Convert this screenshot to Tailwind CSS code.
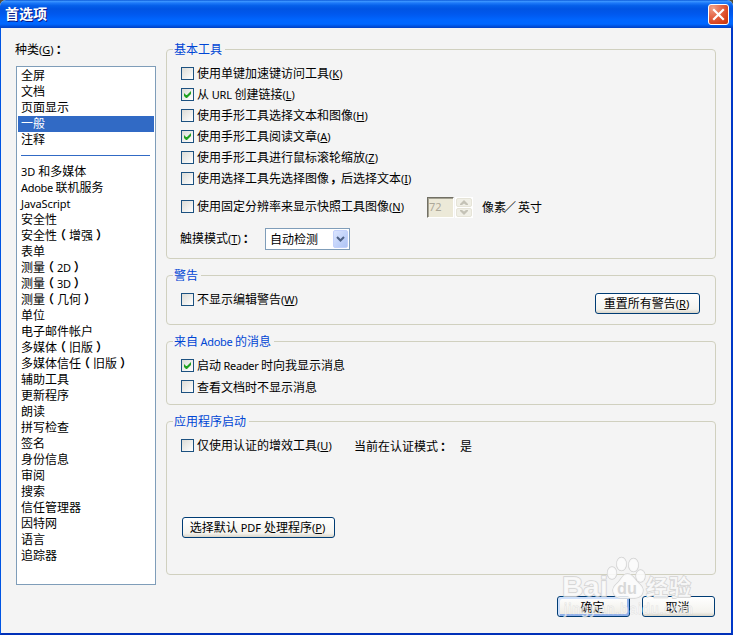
<!DOCTYPE html>
<html lang="zh-CN">
<head>
<meta charset="utf-8">
<title>首选项</title>
<script src="https://cdn.jsdelivr.net/npm/@tailwindcss/browser@4"></script>
</head>
<body class="w-[733px] h-[635px] overflow-hidden bg-[#54503c] font-['Noto_Sans_CJK_SC',sans-serif] text-[12px] leading-[16px] text-black whitespace-nowrap">
<div class="relative w-[733px] h-[635px] flex flex-col overflow-hidden rounded-t-[6px] bg-[#f4f4f4]">
  <header class="h-[28px] shrink-0 flex items-center justify-between pl-[5px] pr-[4px] bg-[linear-gradient(180deg,#0a58d8_0%,#3a94ff_5%,#1c78f8_11%,#0560ea_20%,#0054e3_32%,#0058ee_50%,#0066ff_72%,#0067ff_86%,#0050dc_94%,#0040c4_100%)]">
    <h1 class="text-[14px] leading-[20px] pb-[2px] font-bold text-white [text-shadow:1px_1px_0_#0a1883]">首选项</h1>
    <button class="w-[21px] h-[21px] rounded-[3px] border border-white flex items-center justify-center bg-[radial-gradient(circle_at_20%_15%,#f0a088_0%,#e5694b_38%,#da4621_70%,#c23408_100%)]">
      <svg width="13" height="13" viewBox="0 0 13 13"><path d="M2 2L11 11M11 2L2 11" stroke="#fff" stroke-width="2.2" stroke-linecap="square"/></svg>
    </button>
  </header>
  <main class="flex-1 flex border-l border-l-[#0054e3] border-r-2 border-r-[#0038c8] border-b-2 border-b-[#0030b8]">
    <section class="w-[140px] ml-[15px] pt-[13px]">
      <div class="h-[25px] -ml-px">种类<span class="font-['Noto_Sans'] text-[11px]">(<u>G</u>)</span><span class="relative left-[2px] font-bold">：</span></div>
      <ul class="h-[519px] border border-[#7f9db9] bg-white p-px [&>li]:h-[16px] [&>li]:pl-[3px] [&>li]:leading-[14px]">
        <li>全屏</li>
        <li>文档</li>
        <li>页面显示</li>
        <li class="bg-[#316ac5] text-white">一般</li>
        <li>注释</li>
        <li class="pt-[7px] pr-[4px]"><div class="h-px bg-[#316ac5]"></div></li>
        <li><span class="font-['Noto_Sans'] text-[11px]">3D </span>和多媒体</li>
        <li><span class="font-['Noto_Sans'] text-[11px] tracking-[-0.3px]">Adobe </span>联机服务</li>
        <li><span class="font-['Noto_Sans'] text-[11px] tracking-[-0.1px]">JavaScript</span></li>
        <li>安全性</li>
        <li>安全性<span class="relative -left-[3px] font-bold">（</span>增强<span class="relative left-[3px] font-bold">）</span></li>
        <li>表单</li>
        <li>测量<span class="relative -left-[3px] font-bold">（</span><span class="font-['Noto_Sans'] text-[11px] tracking-[-0.3px]">2D</span><span class="relative left-[3px] font-bold">）</span></li>
        <li>测量<span class="relative -left-[3px] font-bold">（</span><span class="font-['Noto_Sans'] text-[11px] tracking-[-0.3px]">3D</span><span class="relative left-[3px] font-bold">）</span></li>
        <li>测量<span class="relative -left-[3px] font-bold">（</span>几何<span class="relative left-[3px] font-bold">）</span></li>
        <li>单位</li>
        <li>电子邮件帐户</li>
        <li>多媒体<span class="relative -left-[3px] font-bold">（</span>旧版<span class="relative left-[3px] font-bold">）</span></li>
        <li>多媒体信任<span class="relative -left-[3px] font-bold">（</span>旧版<span class="relative left-[3px] font-bold">）</span></li>
        <li>辅助工具</li>
        <li>更新程序</li>
        <li>朗读</li>
        <li>拼写检查</li>
        <li>签名</li>
        <li>身份信息</li>
        <li>审阅</li>
        <li>搜索</li>
        <li>信任管理器</li>
        <li>因特网</li>
        <li>语言</li>
        <li>追踪器</li>
      </ul>
    </section>
    <section class="w-[550px] ml-[10px] pt-[21px]">
      <div class="relative h-[210px] mb-[16px] rounded-[4px] border border-[#d0d0bf] pt-[13px] pl-[14px]">
        <h2 class="absolute -top-[9px] left-[6px] pl-px pr-[3px] bg-[#f4f4f4] text-[#0046d5]">基本工具</h2>
        <label class="h-[21px] flex items-center gap-[3px]"><i class="w-[13px] h-[13px] border border-[#1c5180] bg-linear-to-br from-[#dcdcd7] to-white"></i><span>使用单键加速键访问工具<span class="font-['Noto_Sans'] text-[11px]">(<u>K</u>)</span></span></label>
        <label class="h-[21px] flex items-center gap-[3px]"><i class="w-[13px] h-[13px] border border-[#1c5180] bg-linear-to-br from-[#dcdcd7] to-white"><svg class="block" width="11" height="11" viewBox="0 0 11 11"><path d="M2 4v3l2 2h1l4-4v-3l-4 4h-1z" fill="#21a121"/></svg></i><span>从<span class="font-['Noto_Sans'] text-[11px] tracking-[-0.2px]"> URL </span>创建链接<span class="font-['Noto_Sans'] text-[11px]">(<u>L</u>)</span></span></label>
        <label class="h-[21px] flex items-center gap-[3px]"><i class="w-[13px] h-[13px] border border-[#1c5180] bg-linear-to-br from-[#dcdcd7] to-white"></i><span>使用手形工具选择文本和图像<span class="font-['Noto_Sans'] text-[11px]">(<u>H</u>)</span></span></label>
        <label class="h-[21px] flex items-center gap-[3px]"><i class="w-[13px] h-[13px] border border-[#1c5180] bg-linear-to-br from-[#dcdcd7] to-white"><svg class="block" width="11" height="11" viewBox="0 0 11 11"><path d="M2 4v3l2 2h1l4-4v-3l-4 4h-1z" fill="#21a121"/></svg></i><span>使用手形工具阅读文章<span class="font-['Noto_Sans'] text-[11px]">(<u>A</u>)</span></span></label>
        <label class="h-[21px] flex items-center gap-[3px]"><i class="w-[13px] h-[13px] border border-[#1c5180] bg-linear-to-br from-[#dcdcd7] to-white"></i><span>使用手形工具进行鼠标滚轮缩放<span class="font-['Noto_Sans'] text-[11px]">(<u>Z</u>)</span></span></label>
        <label class="h-[21px] flex items-center gap-[3px]"><i class="w-[13px] h-[13px] border border-[#1c5180] bg-linear-to-br from-[#dcdcd7] to-white"></i><span>使用选择工具先选择图像<span class="relative left-px font-bold">，</span>后选择文本<span class="font-['Noto_Sans'] text-[11px]">(<u>I</u>)</span></span></label>
        <div class="mt-[7px] h-[22px] flex">
          <label class="w-[246px] h-[21px] flex items-center gap-[3px]"><i class="w-[13px] h-[13px] border border-[#1c5180] bg-linear-to-br from-[#dcdcd7] to-white"></i><span>使用固定分辨率来显示快照工具图像<span class="font-['Noto_Sans'] text-[11px]">(<u>N</u>)</span></span></label>
          <div class="w-[27px] h-[21px] mt-px border-t border-l border-t-[#716f64] border-l-[#716f64] border-r border-b border-r-white border-b-white bg-[#ece9d8] shadow-[inset_1px_1px_0_#a5a292] pl-px font-['Noto_Sans'] text-[11px] leading-[18px] text-[#aca899]">72</div>
          <div class="w-[18px] h-[21px] mt-px ml-px bg-white p-px flex flex-col gap-px">
            <span class="flex-1 rounded-[2px] border border-[#e6e4d8] bg-[#f0efe6] flex items-center justify-center"><svg width="8" height="5" viewBox="0 0 8 5"><path d="M0 5V4L4 0L8 4V5H6L4 3.4L2 5Z" fill="#c4c2b6"/></svg></span>
            <span class="flex-1 rounded-[2px] border border-[#e6e4d8] bg-[#f0efe6] flex items-center justify-center"><svg width="8" height="5" viewBox="0 0 8 5"><path d="M0 0V1L4 5L8 1V0H6L4 1.6L2 0Z" fill="#c4c2b6"/></svg></span>
          </div>
          <span class="ml-[9px] pt-[3px]">像素<span class="relative -left-[2px]">／</span>英寸</span>
        </div>
        <div class="mt-[10px] flex h-[22px]">
          <span class="w-[85px] -ml-px pt-[2px]">触摸模式<span class="font-['Noto_Sans'] text-[11px]">(<u>T</u>)</span><span class="relative left-[2px] font-bold">：</span></span>
          <div class="w-[85px] h-[22px] border border-[#7f9db9] bg-white flex items-center justify-between pl-[4px] pr-px">
            <span class="pb-px">自动检测</span>
            <span class="w-[15px] h-[18px] rounded-[2px] bg-linear-to-br from-[#dbe5ff] to-[#aec4f5] border border-[#c3d1fb] flex items-center justify-center"><svg width="9" height="6" viewBox="0 0 9 6"><path d="M1 1L4.500 4.500L8 1" fill="none" stroke="#4d6185" stroke-width="2"/></svg></span>
          </div>
        </div>
      </div>
      <div class="relative h-[50px] mb-[16px] rounded-[4px] border border-[#d0d0bf] pt-[13px] pl-[14px] pr-[15px] flex justify-between">
        <h2 class="absolute -top-[9px] left-[6px] pl-px pr-[3px] bg-[#f4f4f4] text-[#0046d5]">警告</h2>
        <label class="h-[21px] flex items-center gap-[3px]"><i class="w-[13px] h-[13px] border border-[#1c5180] bg-linear-to-br from-[#dcdcd7] to-white"></i><span>不显示编辑警告<span class="font-['Noto_Sans'] text-[11px]">(<u>W</u>)</span></span></label>
        <button class="mt-[4px] w-[105px] h-[21px] rounded-[3px] border border-[#003c74] bg-[linear-gradient(180deg,#fff_0%,#f4f3ee_80%,#d9d5c9_100%)] leading-[18px] pr-[2px]">重置所有警告<span class="font-['Noto_Sans'] text-[11px]">(<u>R</u>)</span></button>
      </div>
      <div class="relative h-[64px] mb-[16px] rounded-[4px] border border-[#d0d0bf] pt-[13px] pl-[14px]">
        <h2 class="absolute -top-[9px] left-[6px] pl-px pr-[3px] bg-[#f4f4f4] text-[#0046d5]">来自<span class="font-['Noto_Sans'] text-[11px] tracking-[-0.3px]"> Adobe </span>的消息</h2>
        <label class="h-[21px] flex items-center gap-[3px]"><i class="w-[13px] h-[13px] border border-[#1c5180] bg-linear-to-br from-[#dcdcd7] to-white"><svg class="block" width="11" height="11" viewBox="0 0 11 11"><path d="M2 4v3l2 2h1l4-4v-3l-4 4h-1z" fill="#21a121"/></svg></i><span>启动<span class="font-['Noto_Sans'] text-[11px] tracking-[-0.3px]"> Reader </span>时向我显示消息</span></label>
        <label class="h-[21px] flex items-center gap-[3px]"><i class="w-[13px] h-[13px] border border-[#1c5180] bg-linear-to-br from-[#dcdcd7] to-white"></i><span>查看文档时不显示消息</span></label>
      </div>
      <div class="relative h-[154px] rounded-[4px] border border-[#d0d0bf] pt-[13px] pl-[14px]">
        <h2 class="absolute -top-[9px] left-[6px] pl-px pr-[3px] bg-[#f4f4f4] text-[#0046d5]">应用程序启动</h2>
        <div class="h-[21px] flex items-center">
          <label class="w-[173px] flex items-center gap-[3px]"><i class="w-[13px] h-[13px] border border-[#1c5180] bg-linear-to-br from-[#dcdcd7] to-white"></i><span>仅使用认证的增效工具<span class="font-['Noto_Sans'] text-[11px]">(<u>U</u>)</span></span></label>
          <span class="w-[106px]">当前在认证模式<span class="relative left-[2px] font-bold">：</span></span><span>是</span>
        </div>
        <button class="mt-[61px] ml-px w-[153px] h-[21px] rounded-[3px] border border-[#003c74] bg-[linear-gradient(180deg,#fff_0%,#f4f3ee_80%,#d9d5c9_100%)] leading-[18px] pr-[2px] block">选择默认<span class="font-['Noto_Sans'] text-[11px]"> PDF </span>处理程序<span class="font-['Noto_Sans'] text-[11px]">(<u>P</u>)</span></button>
      </div>
      <div class="mt-[21px] pr-px flex justify-end gap-[12px]">
        <button class="w-[73px] h-[21px] rounded-[3px] border border-[#003c74] bg-linear-to-b from-white via-[#f6f5f1] to-[#eceae0] shadow-[inset_2px_2px_0_#cee0fb,inset_-2px_-2px_0_#8fb0ea] leading-[18px] pr-[2px]">确定</button>
        <button class="w-[73px] h-[21px] rounded-[3px] border border-[#003c74] bg-[linear-gradient(180deg,#fff_0%,#f4f3ee_80%,#d9d5c9_100%)] leading-[18px] pr-[2px]">取消</button>
      </div>
    </section>
  </main>
  <svg class="absolute left-[555px] top-[552px] pointer-events-none" width="150" height="68" viewBox="0 0 150 68">
    <g fill="#fbfbfb" fill-opacity=".85" stroke="#d2d2d2" stroke-width="1.4" paint-order="stroke" font-weight="bold">
      <path d="M72.500 22c-5 0-6 5-9 8s-7 6-5 11c2 6 9 5 14 5s13 1 15-5c2-5-2-8-5-11s-5-8-10-8z"/>
      <ellipse cx="57" cy="21" rx="4.500" ry="6"/>
      <ellipse cx="66.500" cy="12" rx="4.800" ry="6.500"/>
      <ellipse cx="78.500" cy="13" rx="4.800" ry="6.500"/>
      <ellipse cx="85.500" cy="24" rx="4.500" ry="6"/>
      <text x="7" y="44" font-family="Liberation Sans, sans-serif" font-size="27" textLength="46" lengthAdjust="spacingAndGlyphs">Bai</text>
      <text x="62" y="42" font-family="Liberation Sans, sans-serif" font-size="17" textLength="20" lengthAdjust="spacingAndGlyphs" fill="#d2d2d2" stroke="none">du</text>
      <text x="91" y="43" font-family="Noto Sans CJK SC, sans-serif" font-size="22" textLength="45">经验</text>
    </g>
    <text x="9" y="62" font-family="Liberation Sans, sans-serif" font-size="14" textLength="129" fill="#fff" fill-opacity=".6" stroke="#ccc" stroke-opacity=".5" stroke-width=".8" paint-order="stroke">jingyan.baidu.com</text>
  </svg>
</div>
</body>
</html>
